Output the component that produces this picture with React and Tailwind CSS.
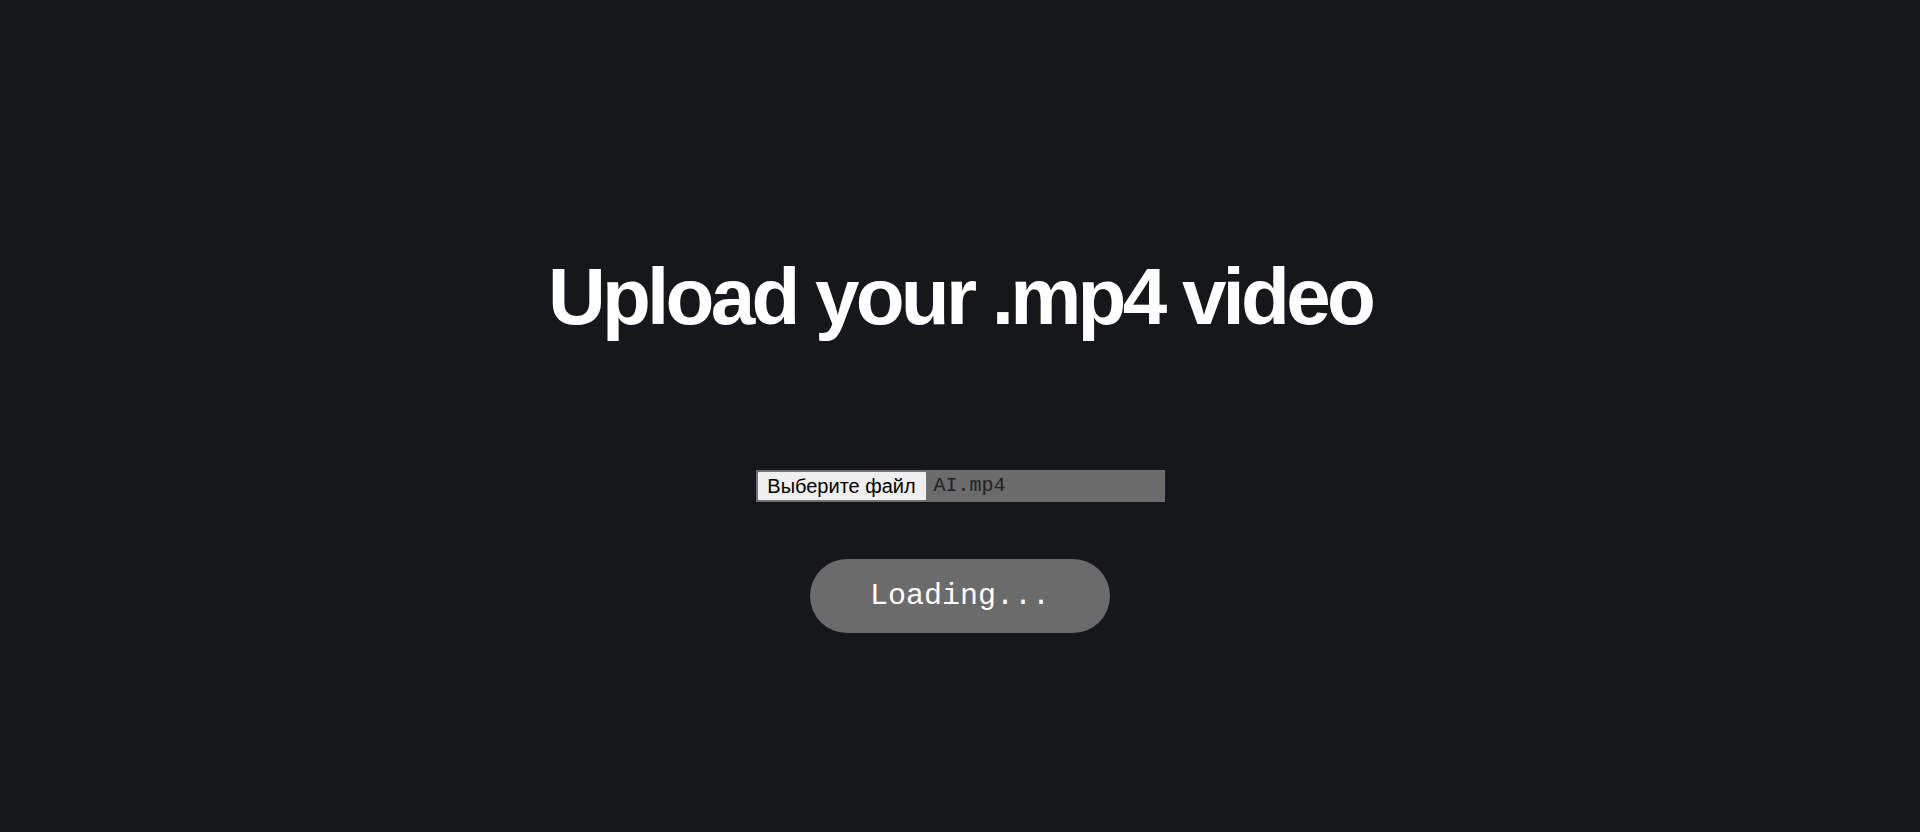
import React from "react";

const App = () => {
  return (
    <div className="h-[832px] w-full bg-[#16171b] flex flex-col items-center pt-[257px] font-['Liberation_Sans',Arial,sans-serif]">
      <h1 className="text-[80px] leading-none font-bold tracking-[-0.047em] text-white">
        Upload your .mp4 video
      </h1>

      <div className="mt-[133px] flex items-center w-[409px] h-[32px] bg-[#6b6b6b] pl-px">
        <button
          type="button"
          className="h-[30px] w-[170px] bg-[#efefef] border border-[#767676] rounded-[2px] text-[20px] leading-none text-black font-['Liberation_Sans',Arial,sans-serif]"
        >
          Выберите файл
        </button>
        <span className="ml-[7px] text-[20px] leading-none text-[#222] font-['Liberation_Mono','Courier_New',monospace]">
          AI.mp4
        </span>
      </div>

      <button
        type="button"
        className="mt-[57px] w-[300px] h-[74px] rounded-full bg-[#6b6b6b] text-white text-[30px] font-['Liberation_Mono','Courier_New',monospace]"
      >
        Loading...
      </button>
    </div>
  );
};

export default App;
